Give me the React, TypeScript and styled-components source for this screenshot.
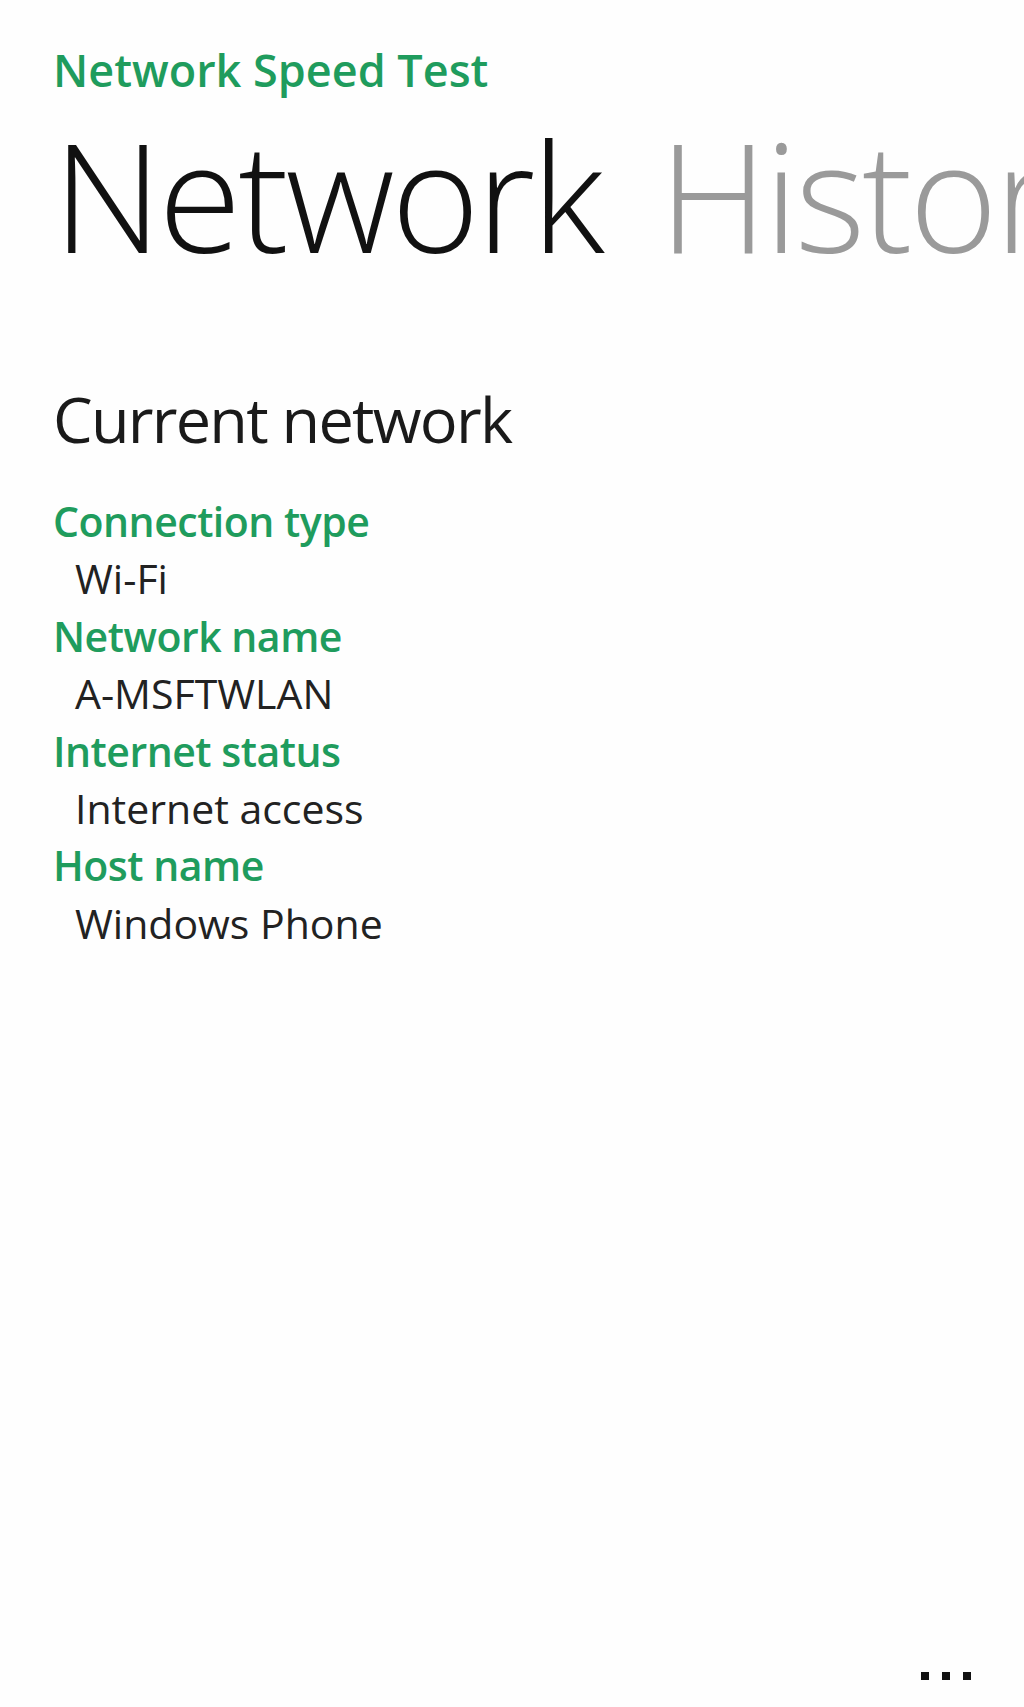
import React from 'react';
import styled, { createGlobalStyle } from "styled-components";

interface fieldProps {
  label: string,
  value: string
}

const fields: Array<fieldProps> = [
  { label: "Connection type", value: "Wi-Fi" },
  { label: "Network name", value: "A-MSFTWLAN" },
  { label: "Internet status", value: "Internet access" },
  { label: "Host name", value: "Windows Phone" },
]

const accent = "#1f9c5d"

const GlobalStyle = createGlobalStyle`
  html, body {
    margin: 0;
    padding: 0;
    background: #fefefe;
  }
  body {
    font-family: "Open Sans", "Noto Sans", "Liberation Sans", sans-serif;
    -webkit-font-smoothing: antialiased;
  }
`

const Page = styled.div`
  display: flex;
  flex-direction: column;
  height: 1707px;
  overflow: hidden;
  background: #fefefe;
`

const Header = styled.header`
  padding: 47px 0 0 53px;
`

const AppTitle = styled.h1`
  margin: 0;
  font-size: 45px;
  line-height: 1;
  font-weight: 600;
  color: ${accent};
`

const Pivots = styled.div`
  display: flex;
  gap: 0.38em;
  margin-top: 27px;
  font-size: 151px;
  line-height: 1;
  font-weight: 300;
  letter-spacing: -0.022em;
  white-space: nowrap;
`

const PivotItem = styled.span<{ $active?: boolean }>`
  color: ${props => props.$active ? "#111" : "#9a9a9a"};
`

const Section = styled.section`
  padding: 117px 0 0 53px;
`

const SectionTitle = styled.h2`
  margin: 0 0 43px;
  font-size: 63px;
  line-height: 1;
  font-weight: 400;
  letter-spacing: -0.028em;
  color: #1a1a1a;
`

const FieldList = styled.dl`
  margin: 0;
  font-size: 41px;
  line-height: 57.4px;
`

const Label = styled.dt`
  font-weight: 600;
  letter-spacing: -0.012em;
  color: ${accent};
`

const Value = styled.dd`
  margin: 0 0 0 22px;
  font-weight: 400;
  color: #222;
`

const Spacer = styled.div`
  flex: 1;
`

const AppBar = styled.footer`
  display: flex;
  justify-content: flex-end;
  gap: 13px;
  padding: 0 53px 27px 0;
`

const Dot = styled.span`
  width: 8px;
  height: 8px;
  background: #111;
`

const App = () => (
  <Page>
    <GlobalStyle />
    <Header>
      <AppTitle>Network Speed Test</AppTitle>
      <Pivots>
        <PivotItem $active>Network</PivotItem>
        <PivotItem>History</PivotItem>
      </Pivots>
    </Header>
    <Section>
      <SectionTitle>Current network</SectionTitle>
      <FieldList>
        {fields.map((item, k) => (
          <React.Fragment key={k}>
            <Label>{item.label}</Label>
            <Value>{item.value}</Value>
          </React.Fragment>
        ))}
      </FieldList>
    </Section>
    <Spacer />
    <AppBar>
      <Dot />
      <Dot />
      <Dot />
    </AppBar>
  </Page>
);

export default App;
